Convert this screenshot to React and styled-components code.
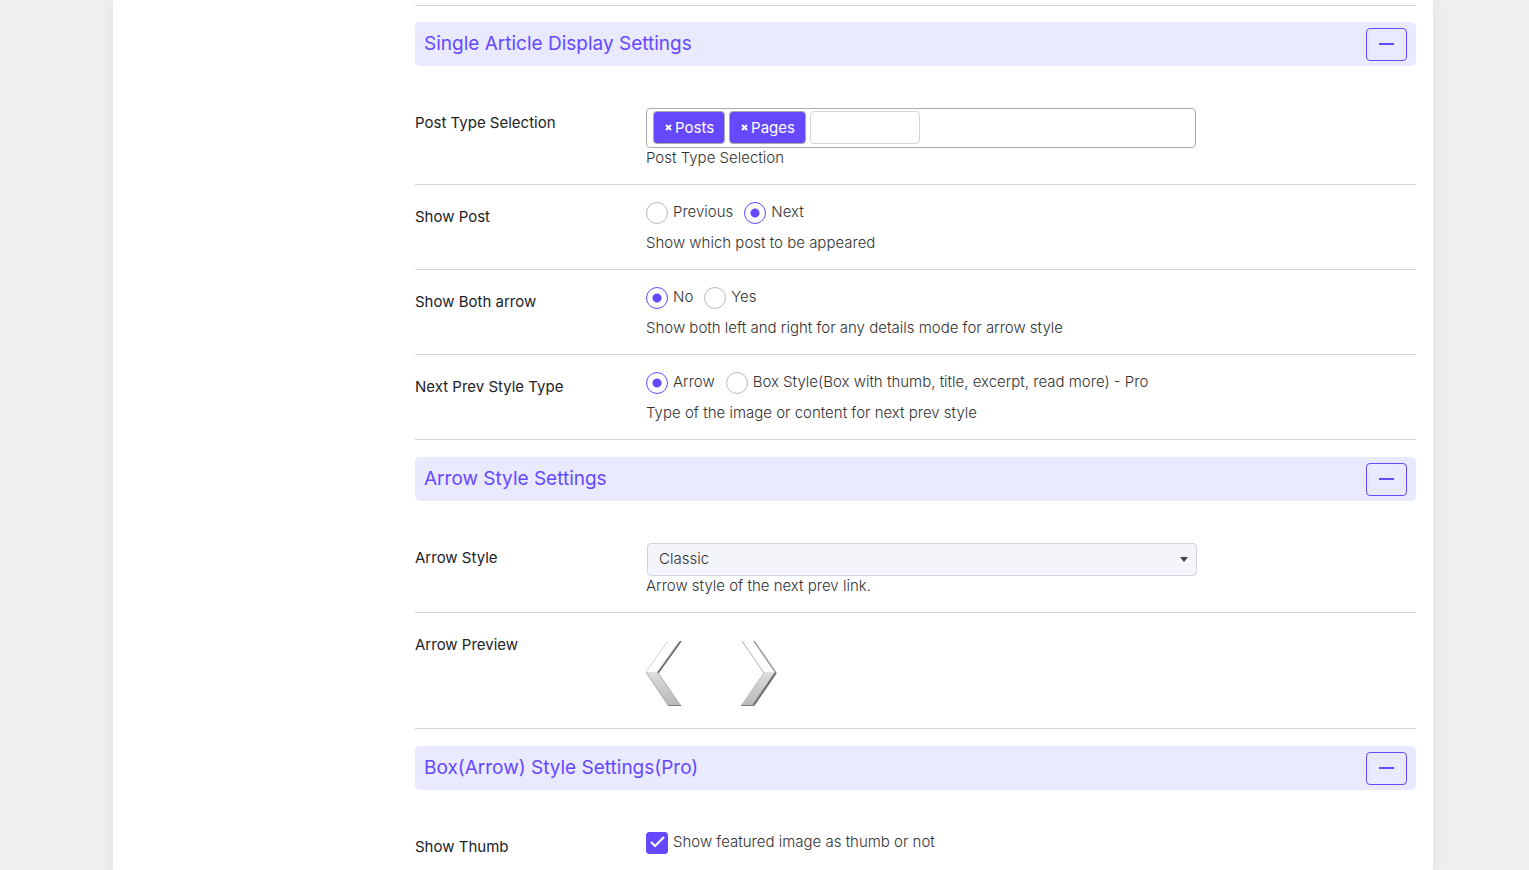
import React from 'react'
import styled, { createGlobalStyle } from 'styled-components'

const GlobalStyle = createGlobalStyle`
  * {
    box-sizing: border-box;
  }
  body {
    margin: 0;
    background: #f0f0f0;
    color: #333;
    font-family: 'Inter', 'Liberation Sans', sans-serif;
    font-size: 15px;
    font-weight: 300;
    line-height: 20px;
    overflow-x: hidden;
  }
`

const RadioRow = ({ label, name, options, value, description }) => {
  return (
    <Row role='radiogroup' aria-label={label}>
      <RowLabel as='span'>{label}</RowLabel>
      <div>
        <Options>
          {options.map((option) => (
            <Option key={option}>
              <Radio
                type='radio'
                name={name}
                value={option}
                defaultChecked={option === value}
              />
              {option}
            </Option>
          ))}
        </Options>
        <Description>{description}</Description>
      </div>
    </Row>
  )
}

const Section = ({ title, children }) => {
  return (
    <section>
      <SectionHeader>
        <h2>{title}</h2>
        <ToggleButton type='button' aria-label={`Collapse ${title}`}>
          <svg width='15' height='2' viewBox='0 0 15 2'>
            <path d='M0 1h15' stroke='currentColor' strokeWidth='2' />
          </svg>
        </ToggleButton>
      </SectionHeader>
      <Rows>{children}</Rows>
    </section>
  )
}

const ArrowPreview = () => {
  return (
    <Arrows>
      <svg width='36' height='65' viewBox='0 0 36 65'>
        <defs>
          <linearGradient id='metal' x1='0' y1='0' x2='0' y2='1'>
            <stop offset='0' stopColor='#dedede' />
            <stop offset='1' stopColor='#b8b8b8' />
          </linearGradient>
        </defs>
        <path d='M22 0h13L12 32H0z' fill='#fff' />
        <path d='M0 31h12l23 34H22z' fill='url(#metal)' />
        <path d='M22 0L0 31' stroke='#d2d2d2' fill='none' />
        <path d='M0 31l22 33' stroke='#aaa' fill='none' />
        <path d='M34 0L12 31' stroke='#ccc' strokeWidth='2' fill='none' />
        <path d='M35 0L12 32' stroke='#666' strokeWidth='1.5' fill='none' />
        <path d='M12 32l23 33' stroke='#b0b0b0' fill='none' />
        <path d='M22 64.5h13' stroke='#777' />
      </svg>
      <svg width='36' height='65' viewBox='0 0 36 65'>
        <path d='M1 0h12l22 32H23z' fill='#fff' />
        <path d='M23 31h12L13 65H0z' fill='url(#metal)' />
        <path d='M1 0l22 32' stroke='#b0b0b0' fill='none' />
        <path d='M13 0l22 32' stroke='#999' strokeWidth='1.5' fill='none' />
        <path d='M23 32L0 65' stroke='#c0c0c0' fill='none' />
        <path d='M34 32L12 64' stroke='#999' strokeWidth='2' fill='none' />
        <path d='M35 32L13 64' stroke='#666' strokeWidth='1.5' fill='none' />
        <path d='M0 64.5h13' stroke='#777' />
      </svg>
    </Arrows>
  )
}

const App = () => {
  return (
    <Panel>
      <GlobalStyle />
      <Divider />
      <Section title='Single Article Display Settings'>
        <Row>
          <RowLabel htmlFor='post-type'>Post Type Selection</RowLabel>
          <div>
            <TagBox>
              {['Posts', 'Pages'].map((tag) => (
                <Tag key={tag} type='button'>
                  <svg width='7' height='7' viewBox='0 0 7 7'>
                    <path d='M1 1l5 5M6 1L1 6' stroke='#fff' strokeWidth='2' />
                  </svg>
                  {tag}
                </Tag>
              ))}
              <TagInput id='post-type' type='text' />
            </TagBox>
            <Description>Post Type Selection</Description>
          </div>
        </Row>
        <RadioRow
          label='Show Post'
          name='show-post'
          options={['Previous', 'Next']}
          value='Next'
          description='Show which post to be appeared'
        />
        <RadioRow
          label='Show Both arrow'
          name='show-both'
          options={['No', 'Yes']}
          value='No'
          description='Show both left and right for any details mode for arrow style'
        />
        <RadioRow
          label='Next Prev Style Type'
          name='style-type'
          options={[
            'Arrow',
            'Box Style(Box with thumb, title, excerpt, read more) - Pro',
          ]}
          value='Arrow'
          description='Type of the image or content for next prev style'
        />
      </Section>
      <Section title='Arrow Style Settings'>
        <Row>
          <RowLabel htmlFor='arrow-style'>Arrow Style</RowLabel>
          <div>
            <Select id='arrow-style' defaultValue='Classic'>
              <option>Classic</option>
            </Select>
            <Description>Arrow style of the next prev link.</Description>
          </div>
        </Row>
        <Row>
          <RowLabel as='span'>Arrow Preview</RowLabel>
          <ArrowPreview />
        </Row>
      </Section>
      <Section title='Box(Arrow) Style Settings(Pro)'>
        <Row>
          <RowLabel htmlFor='show-thumb'>Show Thumb</RowLabel>
          <Option>
            <Checkbox id='show-thumb' type='checkbox' defaultChecked />
            Show featured image as thumb or not
          </Option>
        </Row>
      </Section>
    </Panel>
  )
}

const Panel = styled.main`
  min-height: 100vh;
  margin: 0 96px 0 113px;
  padding: 5px 17px 0 302px;
  background: #fff;
  box-shadow: 0 0 20px rgba(82, 85, 130, 0.1);
`

const Divider = styled.hr`
  height: 1px;
  margin: 0;
  border: 0;
  background: #d3d4d8;
`

const SectionHeader = styled.header`
  display: flex;
  align-items: center;
  justify-content: space-between;
  height: 44px;
  margin-top: 16px;
  padding: 0 9px;
  border-radius: 5px;
  background: #e9e9ff;
  color: #6648ff;

  h2 {
    margin: 0;
    font-size: 19px;
    font-weight: 400;
    line-height: 24px;
  }
`

const ToggleButton = styled.button`
  display: flex;
  align-items: center;
  justify-content: center;
  width: 41px;
  height: 33px;
  padding: 0;
  border: 1px solid #6648ff;
  border-radius: 4px;
  background: transparent;
  color: #6648ff;
`

const Rows = styled.div`
  padding: 25px 0 1px;
`

const Row = styled.div`
  display: grid;
  grid-template-columns: 231px 1fr;
  padding: 17px 0 16px;
  border-bottom: 1px solid #d3d4d8;
`

const RowLabel = styled.label`
  padding-top: 5px;
  color: #1d2327;
  font-weight: 400;
`

const Description = styled.p`
  margin: 0;
`

const Options = styled.div`
  display: flex;
  flex-wrap: wrap;
  gap: 11px;
  margin-bottom: 9px;
`

const Option = styled.label`
  display: flex;
  align-items: flex-start;
  gap: 5px;
  height: 22px;
`

const Radio = styled.input`
  appearance: none;
  flex: none;
  width: 22px;
  height: 22px;
  margin: 0;
  border: 1px solid #bbb;
  border-radius: 50%;
  background: #fff;

  &:checked {
    border-color: #6648ff;
    background: radial-gradient(circle, #6648ff 4px, #fff 5px);
  }
`

const Checkbox = styled.input`
  appearance: none;
  flex: none;
  width: 22px;
  height: 22px;
  margin: 0;
  border: 1px solid #6648ff;
  border-radius: 3px;

  &:checked {
    background: #6648ff
      url("data:image/svg+xml,%3Csvg xmlns='http://www.w3.org/2000/svg' viewBox='0 0 20 20'%3E%3Cpath d='M4 9l4 4L17 4' fill='none' stroke='white' stroke-width='2'/%3E%3C/svg%3E")
      center / 20px no-repeat;
  }
`

const TagBox = styled.div`
  display: flex;
  align-items: flex-start;
  gap: 4px;
  max-width: 550px;
  height: 40px;
  padding: 2px 6px;
  border: 1px solid #aaa;
  border-radius: 4px;
`

const Tag = styled.button`
  display: flex;
  align-items: center;
  gap: 3px;
  height: 33px;
  padding: 0 10px 0 11px;
  border: 1px solid #aaa;
  border-radius: 4px;
  background: #6648ff;
  color: #fff;
  font: inherit;
  font-weight: 400;
`

const TagInput = styled.input`
  width: 110px;
  height: 33px;
  border: 1px solid #d3d5e2;
  border-radius: 4px;
  font: inherit;
`

const Select = styled.select`
  appearance: none;
  display: block;
  width: 100%;
  max-width: 550px;
  height: 33px;
  margin-left: 1px;
  padding: 0 11px 2px;
  border: 1px solid #d0d3df;
  border-radius: 4px;
  background: #f4f5fb
    url("data:image/svg+xml,%3Csvg xmlns='http://www.w3.org/2000/svg' width='8' height='5'%3E%3Cpath d='M0 0h8L4 5z' fill='%23444'/%3E%3C/svg%3E")
    right 8px center no-repeat;
  color: #333;
  font: inherit;
`

const Arrows = styled.div`
  display: flex;
  gap: 59px;
  height: 82px;
  padding-top: 11px;
`

export default App
